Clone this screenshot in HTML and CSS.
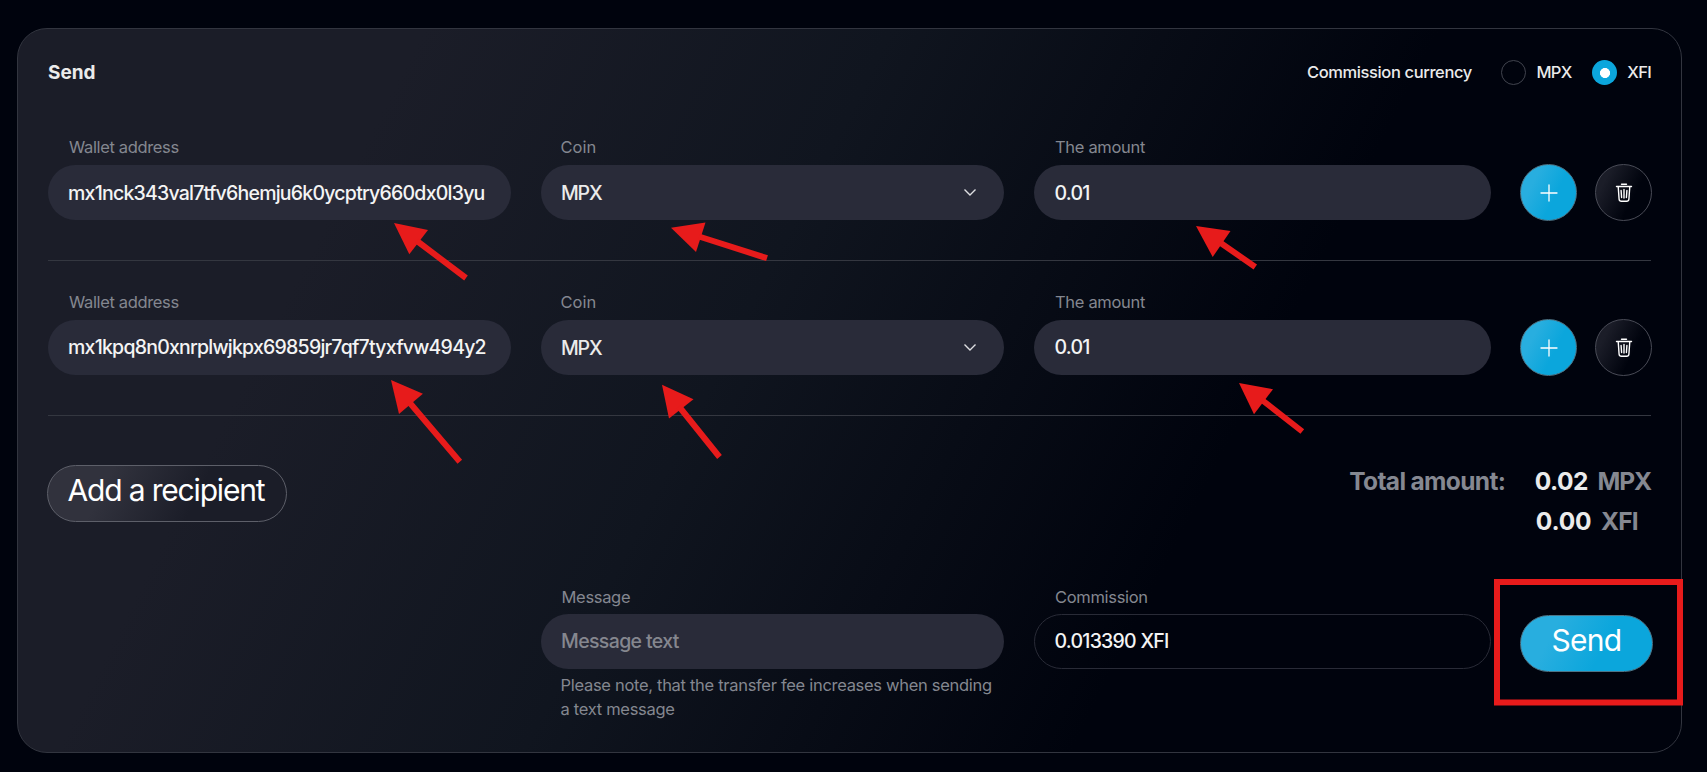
FILE: index.html
```html
<!DOCTYPE html>
<html lang="en">
<head>
<meta charset="utf-8">
<title>Send</title>
<link rel="stylesheet" href="styles.css">
</head>
<body>
<svg class="defs" width="0" height="0" aria-hidden="true">
  <symbol id="chevron" viewBox="0 0 14 9"><path d="M1.500 1.500 7 7l5.500-5.500" fill="none" stroke="currentColor" stroke-width="1.400"/></symbol>
  <symbol id="plus" viewBox="0 0 18 18"><path d="M9 1v16M1 9h16" fill="none" stroke="currentColor" stroke-width="1.300" stroke-linecap="round"/></symbol>
  <symbol id="trash" viewBox="0 0 18 20"><path d="M6.500 1.300h5M1.500 3.500h15M3.200 3.500l.9 12.700a2.300 2.300 0 0 0 2.300 2.100h5.200a2.300 2.300 0 0 0 2.300-2.100l.9-12.700M6.100 7.500l.5 7M9 6.500v8.500M11.900 7.500l-.5 7" fill="none" stroke="currentColor" stroke-width="1.400" stroke-linecap="round"/></symbol>
</svg>
<main class="card">
  <header class="card-head">
    <h1 class="title">Send</h1>
    <div class="currency">
      <span class="currency-label">Commission currency</span>
      <span class="radio"></span><span class="radio-text">MPX</span>
      <span class="radio radio-on"></span><span class="radio-text radio-text-last">XFI</span>
    </div>
  </header>

  <section class="recipient">
    <div class="field field-address"><span class="label label-wallet">Wallet address</span><div class="pill address">mx1nck343val7tfv6hemju6k0ycptry660dx0l3yu</div></div>
    <div class="field field-coin"><span class="label label-coin">Coin</span><div class="pill select"><span class="coin">MPX</span><svg class="chevron"><use href="#chevron"/></svg></div></div>
    <div class="field field-amount"><span class="label label-amount">The amount</span><div class="pill number">0.01</div></div>
    <div class="actions"><button class="round round-add"><svg class="icon-plus"><use href="#plus"/></svg></button><button class="round round-delete"><svg class="icon-trash"><use href="#trash"/></svg></button></div>
  </section>

  <section class="recipient">
    <div class="field field-address"><span class="label label-wallet">Wallet address</span><div class="pill address raised">mx1kpq8n0xnrplwjkpx69859jr7qf7tyxfvw494y2</div></div>
    <div class="field field-coin"><span class="label label-coin">Coin</span><div class="pill select"><span class="coin">MPX</span><svg class="chevron"><use href="#chevron"/></svg></div></div>
    <div class="field field-amount"><span class="label label-amount">The amount</span><div class="pill number raised">0.01</div></div>
    <div class="actions"><button class="round round-add"><svg class="icon-plus"><use href="#plus"/></svg></button><button class="round round-delete"><svg class="icon-trash"><use href="#trash"/></svg></button></div>
  </section>

  <section class="summary">
    <button class="button add">Add a recipient</button>
    <div class="totals">
      <span class="totals-label">Total amount:</span>
      <div class="totals-list">
        <div class="total"><span class="sum">0.02</span><span class="unit">MPX</span></div>
        <div class="total total-xfi"><span class="sum sum-xfi">0.00</span><span class="unit unit-xfi">XFI</span></div>
      </div>
    </div>
  </section>

  <section class="footer">
    <div class="field field-coin"><span class="label">Message</span><div class="pill placeholder raised">Message text</div><p class="note">Please note, that the transfer fee increases when sending a text message</p></div>
    <div class="field field-amount"><span class="label label-amount">Commission</span><div class="pill outlined">0.013390 XFI</div></div>
    <button class="button send">Send</button>
  </section>
</main>

<svg class="marks" viewBox="0 0 1707 772">
  <g fill="#e71b1b">
    <path d="M394 223l34 7-18.700 24.300z"/><path d="M391 380l31.900 13.700-23.900 20.300z"/>
    <path d="M671 227.700l34.500-5.200-9.500 29.500z"/><path d="M662 384.700l31.500 14.600-24.500 19.200z"/>
    <path d="M1196 226l34.500 5-17.800 26z"/><path d="M1239 383l34 6.300-19 25z"/>
  </g>
  <g stroke="#e71b1b" stroke-width="6" fill="none">
    <path d="M417 241l49 37M409.500 402.500l50.300 59.300M699 236.500l68 21.700M679 406.500l40.500 50.500M1220 242.500l35.300 24.500M1262 400l40.300 31.500"/>
    <path d="M1497 582h183v120.500h-183z"/>
  </g>
</svg>
</body>
</html>
```
FILE: styles.css
```css
* { box-sizing: border-box; }
body {
  margin: 0;
  height: 772px;
  padding: 28px 25px 0 17px;
  overflow: hidden;
  background: #00030d;
  font-family: Inter, "Liberation Sans", sans-serif;
  color: #ebebeb;
}
.defs { position: absolute; }
.card {
  height: 725px;
  padding: 29px 30px 0;
  border: 1px solid #32353f;
  border-radius: 30px;
  background: linear-gradient(117deg, #1b1d28 20%, #10151f 43%, #00030d 70%);
}
.card-head { display: flex; justify-content: space-between; align-items: center; height: 29px; margin-bottom: 48px; }
.title { margin: 0; font-size: 19px; font-weight: 700; }
.currency { display: flex; align-items: center; height: 28px; margin-bottom: 1px; font-size: 16.5px; font-weight: 500; letter-spacing: -.38px; }
.currency-label { margin-right: 29.5px; }
.radio { width: 25px; height: 25px; margin-right: 10px; border: 1px solid #41444e; border-radius: 50%; }
.radio-on { margin-left: 20.5px; border: 0; background: radial-gradient(circle at 13px 13px, #fff 4.700px, #0ba6dc 5.300px); }
.radio-text { letter-spacing: -.6px; }
.radio-text-last { letter-spacing: -.7px; }

.recipient { display: flex; align-items: flex-end; gap: 30px; height: 126px; padding-bottom: 40px; margin-bottom: 29px; border-bottom: 1px solid #343740; }
.field { display: flex; flex-direction: column; flex: none; }
.field-address, .field-coin { width: 463px; }
.field-amount { width: 457px; }
.label { height: 24px; margin: 0 0 6px 20.5px; font-size: 16.5px; line-height: 24px; letter-spacing: -.32px; color: #848790; }
.label-wallet { margin-left: 21px; letter-spacing: -.36px; }
.label-coin { margin-left: 19.5px; letter-spacing: 0; }
.label-amount { margin-left: 21px; }
.pill { display: flex; align-items: center; height: 55px; padding: 0 20px; border-radius: 28px; background: #292b39; font-size: 19.5px; font-weight: 500; white-space: nowrap; color: #f4f4f4; }
.address { letter-spacing: -.77px; }
.number { padding-left: 20.5px; letter-spacing: -.75px; }
.raised { padding-bottom: 2px; }
.select { justify-content: space-between; padding-right: 27px; color: #ebebeb; }
.coin { letter-spacing: -1.2px; }
.chevron { width: 14px; height: 9px; color: #dedfe2; }
.actions { display: flex; gap: 18px; margin: 0 -1px -1px -1px; }
.round { display: flex; align-items: center; justify-content: center; width: 57px; height: 57px; padding: 0; border: 1px solid #494b56; border-radius: 50%; color: #fff; }
.round-add { background: linear-gradient(117deg, #28aedf 25%, #0ba6dc 60%); border-color: #4d7587; }
.round-delete { background: linear-gradient(117deg, #1b1d28 20%, #00030d 65%); }
.icon-plus { width: 18px; height: 18px; }
.icon-trash { width: 18px; height: 20px; }

.summary { display: flex; justify-content: space-between; height: 80px; margin-top: 45px; }
.button { height: 57px; border: 1px solid #5d5f69; border-radius: 29px; padding: 0 0 7px; font: 400 30px Inter, "Liberation Sans", sans-serif; color: #fff; }
.add { width: 240px; margin: 4px 0 0 -1px; padding-right: 2px; letter-spacing: -1.17px; background: linear-gradient(117deg, #31323d 25%, #1b1d28 62%); }
.totals { display: flex; gap: 29.5px; font-size: 24.5px; font-weight: 700; line-height: 40px; }
.totals-label { letter-spacing: -.65px; color: #858891; }
.total { display: flex; gap: 9.5px; }
.total-xfi { padding-left: 1px; }
.sum { letter-spacing: -.5px; }
.sum-xfi { letter-spacing: -.15px; }
.unit { font-weight: 700; letter-spacing: -1.1px; color: #858891; }
.unit-xfi { letter-spacing: -.9px; }

.footer { display: flex; gap: 30px; margin: 44px 0 0 493px; }
.footer .label { margin-bottom: 5px; }
.placeholder { letter-spacing: -.64px; color: #85878f; }
.outlined { border: 1px solid #292b37; background: transparent; letter-spacing: -.75px; padding: 0 19.5px 1px; }
.note { margin: 4px 0 0 19.5px; font-size: 16.5px; line-height: 24px; letter-spacing: -.3px; color: #848790; }
.send { flex: none; width: 133px; margin: 30px 0 0 -1px; letter-spacing: -.75px; background: linear-gradient(117deg, #28aedf 25%, #0ba6dc 62%); border-color: #4d7587; }
.marks { position: absolute; left: 0; top: 0; width: 1707px; height: 772px; pointer-events: none; }
```
